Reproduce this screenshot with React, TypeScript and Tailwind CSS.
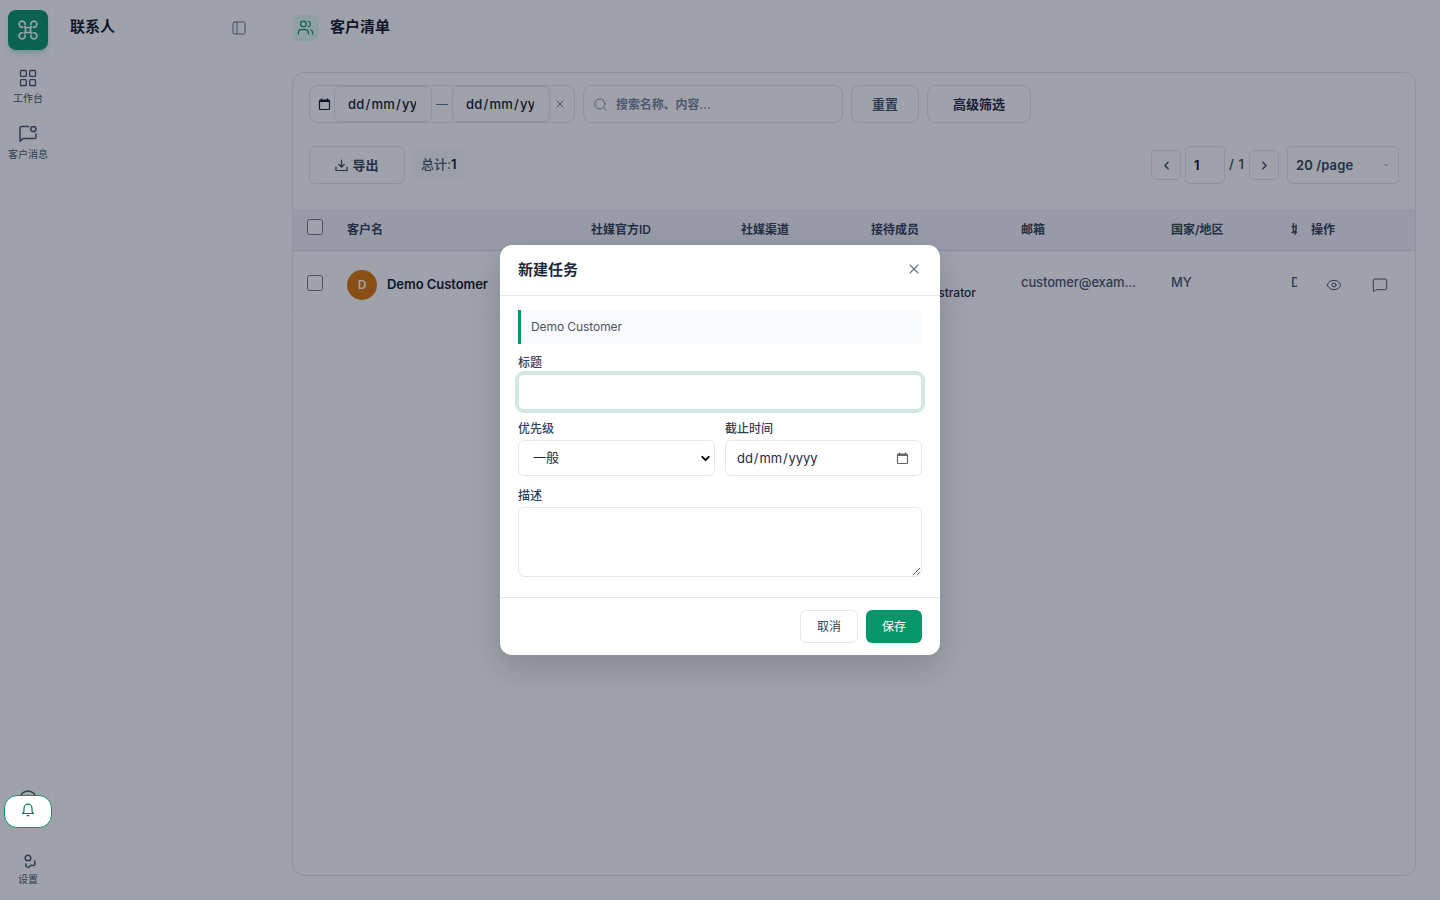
import React from 'react';
import {
  ChevronDown,
  ChevronLeft,
  ChevronRight,
  Eye,
  LayoutGrid,
  MessageSquare,
  PanelLeft,
  Search,
  Users,
  X,
} from 'lucide-react';
import { clsx } from 'clsx';

const columns = [
  { label: '社媒官方ID', width: 'w-[150px]' },
  { label: '社媒渠道', width: 'w-[130px]' },
  { label: '接待成员', width: 'w-[150px]' },
  { label: '邮箱', width: 'w-[150px]' },
  { label: '国家/地区', width: 'w-[120px]' },
];

export default function App() {
  return (
    <div className="relative flex h-[900px] w-[1440px] overflow-hidden bg-white font-['Inter','Noto_Sans_CJK_SC',sans-serif] text-slate-900">
      <NavRail />
      <ContactsPanel />
      <main className="flex min-w-0 flex-1 flex-col">
        <header className="flex h-[54px] items-center gap-[11px] border-b border-slate-50 pt-0.5 pl-[25px]">
          <div className="flex size-[26px] items-center justify-center rounded-md bg-emerald-100/60 pr-px text-[#059669]">
            <Users size={17} strokeWidth={1.7} />
          </div>
          <h1 className="text-[15px] font-semibold">客户清单</h1>
        </header>
        <div className="flex-1 px-6 pt-[18px] pb-6">
          <section className="flex h-[804px] flex-col overflow-hidden rounded-xl border border-slate-200">
            <FilterBar />
            <Toolbar />
            <CustomerTable />
          </section>
        </div>
      </main>

      <div className="absolute inset-0 flex items-center justify-center bg-slate-900/40">
        <TaskDialog />
      </div>

      {/* Notification button floats over everything */}
      <button className="absolute top-[795px] left-1 flex h-[33px] w-12 items-center justify-center rounded-[13px] border-[1.5px] border-[#059669] bg-white pb-1 text-emerald-700">
        <svg width="14" height="16" viewBox="0 0 14 16" fill="none" stroke="currentColor" strokeWidth="1.2" strokeLinecap="round" strokeLinejoin="round">
          <path d="M1.500 11.500c1-.6 1.500-1.500 1.500-3V6.200a4 4 0 0 1 8 0v2.300c0 1.500.5 2.400 1.500 3zM6.200 13.700h1.600" />
        </svg>
      </button>
    </div>
  );
}

function NavRail() {
  return (
    <aside className="flex w-14 flex-col items-center border-r border-slate-50 pt-2.5 pl-px">
      <div className="flex size-10 items-center justify-center rounded-lg bg-[#059669] text-white shadow-md shadow-emerald-600/20">
        <BrandMark />
      </div>
      <NavItem className="mt-[18px]" icon={<LayoutGrid size={20} strokeWidth={1.6} />} label="工作台" />
      <NavItem className="mt-[17px]" icon={<NotifyMessageIcon />} label="客户消息" />
      <div className="mt-auto flex flex-col items-center pb-[14px]">
        <svg className="mb-[45px]" width="18" height="18" viewBox="0 0 18 18" fill="none" stroke="#475569" strokeWidth="1.5">
          <circle cx="9" cy="10" r="8" />
        </svg>
        <svg width="18" height="18" viewBox="0 0 18 18" fill="none" stroke="#475569" strokeWidth="1.5" strokeLinecap="round" className="ml-0.5">
          <circle cx="8" cy="6" r="2.800" />
          <path d="M5.800 12c-.3 2.300.8 3.400 2.300 3.400 1.900 0 1.300-2.200 3.200-2.200 1.400 0 2.100.8 3.100-.1.900-.9.700-2.700.2-4.100" />
        </svg>
        <span className="mt-0.5 text-[10px] leading-[14px] text-slate-600">设置</span>
      </div>
    </aside>
  );
}

function BrandMark() {
  return (
    <svg width="24" height="24" viewBox="0 0 24 24" fill="none" stroke="currentColor" strokeWidth="1.7" strokeLinecap="round">
      <path d="M9.500 9.500h5v5h-5z" />
      <path d="M9.500 9.500 8.600 8.600M14.500 9.500l.9-.9M9.500 14.500l-.9.9M14.500 14.500l.9.9" />
      <path d="M9.200 6.600A3.050 3.050 0 1 0 6.600 9.200M17.400 9.200a3.050 3.050 0 1 0-2.600-2.600M14.800 17.400a3.050 3.050 0 1 0 2.600-2.600M6.600 14.800a3.050 3.050 0 1 0 2.600 2.600" />
    </svg>
  );
}

function NavItem({ icon, label, className }: { icon: React.ReactNode; label: string; className?: string }) {
  return (
    <div className={clsx('flex flex-col items-center gap-[3px] text-slate-600', className)}>
      {icon}
      <span className="mb-px text-[10px] leading-[15px] whitespace-nowrap">{label}</span>
    </div>
  );
}

function NotifyMessageIcon() {
  return (
    <svg width="20" height="20" viewBox="0 0 20 20" fill="none" stroke="currentColor" strokeWidth="1.5" strokeLinecap="round" strokeLinejoin="round">
      <path d="M10.500 2.500H3.600A1.600 1.600 0 0 0 2 4.100V17.500l3-3h11.400a1.600 1.600 0 0 0 1.600-1.600V10" />
      <circle cx="15.400" cy="5" r="2.600" />
    </svg>
  );
}

function ContactsPanel() {
  return (
    <aside className="w-[212px]">
      <div className="flex h-[54px] items-center justify-between border-b border-slate-50 pt-0.5 pr-[21px] pl-3.5">
        <h2 className="text-[15px] font-semibold">联系人</h2>
        <PanelLeft size={16} strokeWidth={1.5} className="text-slate-500" />
      </div>
    </aside>
  );
}

function FilterBar() {
  return (
    <div className="mx-4 flex h-[62px] shrink-0 gap-2 border-b border-slate-50 pt-3 text-[13px] font-semibold">
      <div className="flex h-[38px] w-[266px] items-stretch rounded-lg border border-slate-200">
        <div className="flex w-6 items-center justify-center pl-1">
          <CalendarMark className="text-slate-900" />
        </div>
        <DateField />
        <div className="flex w-5 items-center justify-center">
          <span className="h-px w-3 bg-slate-500" />
        </div>
        <DateField />
        <div className="flex flex-1 items-center justify-center pr-1 text-slate-500">
          <X size={12} strokeWidth={2} />
        </div>
      </div>
      <label className="flex h-[38px] w-[260px] items-center gap-2 rounded-lg border border-slate-200 pr-2.5 pl-[9px] text-slate-400">
        <Search size={15} strokeWidth={1.6} className="shrink-0 text-slate-500/80" />
        <input
          className="w-full pt-px text-[12px] font-semibold tracking-[-0.1px] outline-none placeholder:text-slate-500/90"
          placeholder="搜索名称、内容..."
        />
      </label>
      <button className="h-[38px] w-[68px] rounded-lg border border-slate-200 pt-px text-slate-600">重置</button>
      <button className="h-[38px] w-[104px] rounded-lg border border-slate-200 pt-px text-slate-800">高级筛选</button>
    </div>
  );
}

function DateField() {
  return (
    <div className="flex w-[98px] items-center rounded-md border border-slate-200 px-[13px] pt-0.5">
      <DateText className="w-[68px] overflow-hidden font-medium tracking-[0.2px] text-slate-900" />
    </div>
  );
}

function DateText({ className }: { className?: string }) {
  return (
    <span className={clsx('text-[13px] whitespace-nowrap', className)}>
      dd<span className="px-px">/</span>mm<span className="px-px">/</span>yyyy
    </span>
  );
}

function Toolbar() {
  return (
    <div className="flex h-[74px] shrink-0 items-start px-4 pt-[11px] text-[13px] font-semibold">
      <button className="flex h-[38px] w-24 items-center justify-center gap-1 rounded-md border border-slate-200 pt-px text-slate-700">
        <svg width="13" height="13" viewBox="0 0 13 13" fill="none" stroke="currentColor" strokeWidth="1.2" strokeLinecap="round" strokeLinejoin="round">
          <path d="M6.500 1v7M3.800 5.500l2.700 2.700 2.700-2.700M1 8v3.500h11V8" />
        </svg>
        导出
      </button>
      <div className="mt-[3px] ml-2 flex h-[31px] items-center rounded-md bg-slate-50 px-2 font-medium text-slate-600">
        总计:<span className="font-semibold text-slate-900">1</span>
      </div>
      <div className="ml-auto flex items-center gap-1 text-slate-700">
        <PagerButton>
          <ChevronLeft size={13} strokeWidth={2.5} />
        </PagerButton>
        <div className="flex h-[38px] w-10 items-center rounded-[5px] border border-slate-200 pt-px pl-2 text-black">1</div>
        <span className="w-4 font-medium tracking-[0.6px] whitespace-nowrap">/ 1</span>
        <PagerButton>
          <ChevronRight size={13} strokeWidth={2.5} />
        </PagerButton>
        <div className="ml-1 flex h-[38px] w-28 items-center justify-between rounded-[5px] border border-slate-200 px-2">
          <span className="pt-px tracking-[0.1px]">20 /page</span>
          <ChevronDown size={8} strokeWidth={2} className="text-slate-500" />
        </div>
      </div>
    </div>
  );
}

function PagerButton({ children }: { children: React.ReactNode }) {
  return (
    <button className="flex size-[30px] items-center justify-center rounded-[5px] border border-slate-200">{children}</button>
  );
}

function CustomerTable() {
  return (
    <div className="text-[12px]">
      <div className="flex h-[42px] items-center border-y border-slate-300/70 border-t-slate-100 bg-[#f3f3fa] font-semibold text-slate-700">
        <div className="w-10 pb-1.5 pl-3.5">
          <Checkbox />
        </div>
        <div className="w-[244px] pl-3.5">客户名</div>
        {columns.map((column) => (
          <div key={column.label} className={clsx('pl-3.5', column.width)}>
            {column.label}
          </div>
        ))}
        <div className="w-5 overflow-hidden pl-3.5 whitespace-nowrap">城市</div>
        <div className="pl-3.5">操作</div>
      </div>
      <div className="flex h-[69px] items-center border-b border-slate-50 text-[13px] font-medium text-slate-600">
        <div className="w-10 pb-1 pl-3.5">
          <Checkbox />
        </div>
        <div className="flex w-[244px] items-center gap-2.5 pl-3.5 font-semibold tracking-[-0.05px] text-slate-900">
          <span className="flex size-[30px] items-center justify-center rounded-full bg-[#d97706] text-[12px] text-white">D</span>
          Demo Customer
        </div>
        <div className="w-[150px]" />
        <div className="w-[130px]" />
        <div className="w-[150px] pt-4 pl-[30px] text-[12px] text-slate-800">
          <span className="block w-[89px] text-right">Administrator</span>
        </div>
        <div className="w-[150px] pb-1 pl-3.5 tracking-[-0.12px]">customer@exam...</div>
        <div className="w-[120px] pb-1 pl-3.5">MY</div>
        <div className="w-5 overflow-hidden pb-1 pl-3.5 whitespace-nowrap">Demo</div>
        <div className="flex items-center gap-[30px] pl-[29px]">
          <Eye size={16} strokeWidth={1.5} />
          <MessageSquare size={16} strokeWidth={1.5} />
        </div>
      </div>
    </div>
  );
}

function Checkbox() {
  return <span className="block size-4 rounded-[2.500px] border border-[#767676] bg-white" />;
}

function TaskDialog() {
  return (
    <div className="flex h-[410px] w-[440px] flex-col rounded-xl bg-white text-[12px] shadow-[0_12px_32px_rgba(15,23,42,0.18)]">
      <div className="flex h-[51px] items-center justify-between border-b border-slate-200 px-[18px]">
        <h2 className="text-[15px] font-semibold text-slate-800">新建任务</h2>
        <X size={16} strokeWidth={1.6} className="mb-0.5 text-slate-500" />
      </div>
      <div className="flex-1 px-[18px] pt-3.5 text-slate-700">
        <div className="mb-2.5 flex h-[34px] items-center rounded-md rounded-l-none border-l-3 border-[#059669] bg-slate-50 pl-2.5 text-[12px] tracking-[-0.08px] text-gray-600">
          Demo Customer
        </div>
        <FieldLabel>标题</FieldLabel>
        <input className="block h-9 w-full rounded-md border border-[#cfe6dd] px-3 ring-3 ring-[#d2e8df] outline-none" />
        <div className="mt-2.5 grid grid-cols-2 gap-2.5">
          <div>
            <FieldLabel>优先级</FieldLabel>
            <div className="flex h-9 items-center justify-between rounded-md border border-slate-200 pr-0.5 pl-3.5 text-[13px] text-slate-800">
              一般
              <ChevronDown size={13} strokeWidth={3.5} className="text-black" />
            </div>
          </div>
          <div>
            <FieldLabel>截止时间</FieldLabel>
            <div className="flex h-9 items-center justify-between rounded-md border border-slate-200 pr-3 pl-[11px] text-slate-800">
              <DateText className="pt-px tracking-[-0.08px]" />
              <CalendarMark className="text-[#666]" />
            </div>
          </div>
        </div>
        <div className="mt-[11px]">
          <FieldLabel>描述</FieldLabel>
          <textarea className="block h-[70px] w-full resize rounded-md border border-slate-200 outline-none" />
        </div>
      </div>
      <div className="flex h-[58px] items-start justify-end gap-2 border-t border-slate-200 px-[18px] pt-3">
        <button className="h-[33px] w-[58px] rounded-md border border-slate-200 text-slate-700">取消</button>
        <button className="h-[33px] w-14 rounded-md bg-[#059669] text-white">保存</button>
      </div>
    </div>
  );
}

function FieldLabel({ children }: { children: React.ReactNode }) {
  return <div className="mb-1 h-4 text-[12px] leading-[17px] font-medium text-slate-700">{children}</div>;
}

function CalendarMark({ className }: { className?: string }) {
  return (
    <svg width="13" height="13" viewBox="0 0 13 13" fill="none" stroke="currentColor" strokeWidth="1.200" className={className}>
      <rect x="1.500" y="2" width="10" height="9.500" rx="1" />
      <path d="M1.500 3h10" strokeWidth="2" />
      <path d="M3.500 .5v2M9.500 .5v2" />
    </svg>
  );
}
